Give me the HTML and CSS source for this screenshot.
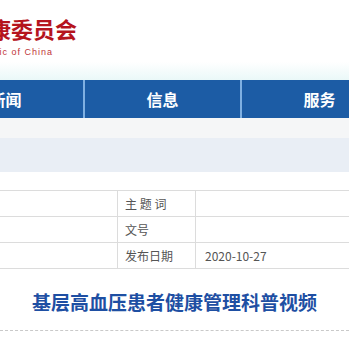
FILE: index.html
```html
<!DOCTYPE html>
<html lang="zh-CN">
<head>
  <meta charset="UTF-8">
  <title>基层高血压患者健康管理科普视频</title>
  <link rel="stylesheet" href="styles.css">
</head>
<body>

<!-- Header with site logo -->
<div class="header">
  <div class="logo-cn">国家卫生健康委员会</div>
  <div class="logo-en">National Health Commission of the People's Republic of China</div>
</div>

<!-- Main navigation -->
<div class="nav">
  <div class="nav-item">新闻</div>
  <div class="nav-item">信息</div>
  <div class="nav-item">服务</div>
</div>

<div class="band-light"></div>
<div class="band-blue"></div>

<!-- Document info table -->
<table class="info">
  <tr>
    <td class="blank"></td>
    <td class="label">主 题 词</td>
    <td class="value"></td>
  </tr>
  <tr>
    <td class="blank"></td>
    <td class="label">文号</td>
    <td class="value"></td>
  </tr>
  <tr>
    <td class="blank"></td>
    <td class="label">发布日期</td>
    <td class="value">2020-10-27</td>
  </tr>
</table>

<h1 class="title">基层高血压患者健康管理科普视频</h1>

</body>
</html>
```

FILE: styles.css
```css
html, body {
  margin: 0;
  background-color: #fff;
  font-family: "Noto Sans CJK SC", "Noto Sans", sans-serif;
  overflow: hidden;
}

/* Header */
.header {
  height: 80px;
  padding-top: 16px;
  box-sizing: border-box;
  background: linear-gradient(to bottom, #fff 0, #fff 62px, #eaf8f8 80px);
  white-space: nowrap;
}

.logo-cn {
  margin-left: -121px;
  font-size: 22px;
  line-height: 24px;
  font-weight: 700;
  color: #b5141d;
}

.logo-en {
  width: 340px;
  margin-left: -287px;
  margin-top: 6px;
  text-align: right;
  font-family: "Liberation Sans", Arial, sans-serif;
  font-size: 9px;
  line-height: 12px;
  letter-spacing: 1px;
  color: #c0343a;
}

/* Navigation */
.nav {
  display: flex;
  height: 38px;
  margin-left: -72px;
  background-color: #1c5ca5;
  white-space: nowrap;
}

.nav-item {
  flex: none;
  width: 155px;
  border-right: 2px solid #7fb0e2;
  text-align: center;
  line-height: 38px;
  font-size: 16px;
  font-weight: 700;
  color: #fff;
}

.band-light {
  height: 20px;
  background-color: #f5f6f7;
}

.band-blue {
  height: 34px;
  background-color: #e9eef5;
}

/* Info table */
.info {
  margin-top: 18px;
  margin-left: -10px;
  border-collapse: collapse;
  width: 380px;
}

.info td {
  height: 25px;
  padding: 0;
  border: 1px solid #dcdcdc;
  font-size: 12px;
  color: #555;
}

.info .blank {
  width: 126px;
}

.info .label {
  width: 70px;
  padding-left: 7px;
}

.info .value {
  padding-left: 9px;
}

/* Article title */
.title {
  margin: 0;
  padding: 22px 0 17px;
  border-bottom: 1px dashed #c9c9c9;
  text-align: center;
  font-size: 19px;
  line-height: 22px;
  font-weight: 700;
  color: #1e4fa3;
}
```
